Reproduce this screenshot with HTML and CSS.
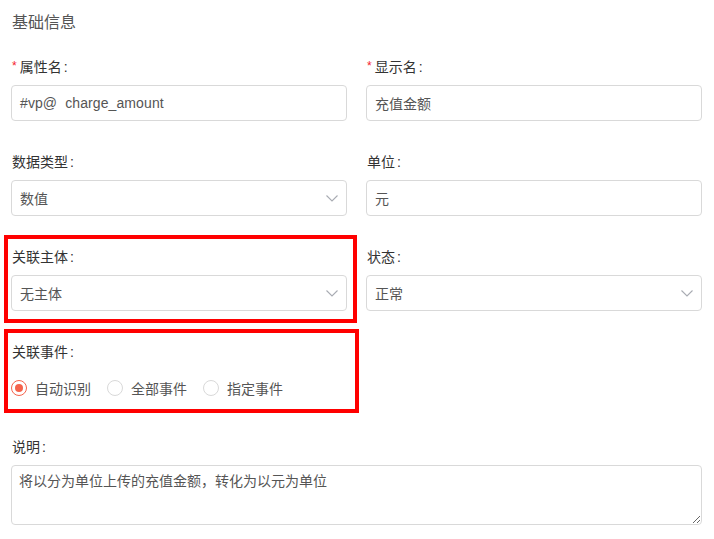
FILE: index.html
```html
<!DOCTYPE html>
<html lang="zh">
<head>
<meta charset="utf-8">
<link rel="stylesheet" href="styles.css">
</head>
<body>
<div class="page">
  <div class="title">基础信息</div>
  <div class="grid">
    <div class="item">
      <div class="label"><span class="star">*</span>属性名<span class="colon">:</span></div>
      <div class="control"><span class="value latin">#vp@&nbsp;&nbsp;charge_amount</span></div>
    </div>
    <div class="item">
      <div class="label"><span class="star">*</span>显示名<span class="colon">:</span></div>
      <div class="control"><span class="value">充值金额</span></div>
    </div>
    <div class="item">
      <div class="label">数据类型<span class="colon">:</span></div>
      <div class="control select"><span class="value">数值</span>
        <svg class="chev" width="12" height="7" viewBox="0 0 12 7"><path d="M0.5 0.5 L6 6 L11.5 0.5" fill="none" stroke="#a8abb2" stroke-width="1.1"/></svg>
      </div>
    </div>
    <div class="item">
      <div class="label">单位<span class="colon">:</span></div>
      <div class="control"><span class="value">元</span></div>
    </div>
    <div class="item">
      <div class="label">关联主体<span class="colon">:</span></div>
      <div class="control select"><span class="value">无主体</span>
        <svg class="chev" width="12" height="7" viewBox="0 0 12 7"><path d="M0.5 0.5 L6 6 L11.5 0.5" fill="none" stroke="#a8abb2" stroke-width="1.1"/></svg>
      </div>
    </div>
    <div class="item">
      <div class="label">状态<span class="colon">:</span></div>
      <div class="control select"><span class="value">正常</span>
        <svg class="chev" width="12" height="7" viewBox="0 0 12 7"><path d="M0.5 0.5 L6 6 L11.5 0.5" fill="none" stroke="#a8abb2" stroke-width="1.1"/></svg>
      </div>
    </div>
    <div class="item">
      <div class="label">关联事件<span class="colon">:</span></div>
      <div class="radios">
        <span class="radio checked"><span class="dot"></span>自动识别</span>
        <span class="radio"><span class="dot"></span>全部事件</span>
        <span class="radio"><span class="dot"></span>指定事件</span>
      </div>
    </div>
    <div class="item"></div>
    <div class="item full">
      <div class="label">说明<span class="colon">:</span></div>
      <textarea class="area">将以分为单位上传的充值金额，转化为以元为单位</textarea>
    </div>
  </div>
  <div class="mark mark-1"></div>
  <div class="mark mark-2"></div>
</div>
</body>
</html>
```

FILE: styles.css
```css
* { box-sizing: border-box; }
html, body { margin: 0; padding: 0; background: #fff; }
body {
  font-family: "Liberation Sans", "Noto Sans CJK SC", sans-serif;
  font-size: 14px;
  color: #333;
}
.page {
  position: relative;
  width: 714px;
  height: 539px;
  overflow: hidden;
  padding: 13px 12px 0 11px;
}
.title {
  font-size: 16px;
  line-height: 20px;
  color: #555;
  margin-bottom: 24px;
  padding-left: 1px;
}
.grid {
  display: grid;
  grid-template-columns: 336px 336px;
  column-gap: 19px;
}
.item { margin-bottom: 31px; }
.item.full { grid-column: 1 / span 2; }
.label {
  height: 20px;
  line-height: 20px;
  margin-bottom: 8px;
  color: #333;
  padding-left: 1px;
  display: flex;
  align-items: center;
}
.star {
  color: #f5222d;
  font-size: 12px;
  margin-right: 3px;
  position: relative;
  top: -1px;
}
.colon { margin-left: 2px; }
.control {
  height: 36px;
  border: 1px solid #d9d9d9;
  border-radius: 4px;
  display: flex;
  align-items: center;
  padding: 0 8px;
  color: #555;
}
.value { flex: 1; }
.latin { letter-spacing: 0.1px; }
.chev { margin-right: 0; }
.radios {
  height: 36px;
  display: flex;
  align-items: center;
  color: #555;
}
.radio {
  display: flex;
  align-items: center;
  margin-right: 16px;
}
.dot {
  width: 16px;
  height: 16px;
  border: 1px solid #d9d9d9;
  border-radius: 50%;
  margin-right: 8px;
  display: flex;
  align-items: center;
  justify-content: center;
}
.radio.checked .dot { border-color: #f5624b; }
.radio.checked .dot::after {
  content: "";
  width: 8px;
  height: 8px;
  border-radius: 50%;
  background: #f5624b;
}
.area {
  display: block;
  width: 691px;
  height: 60px;
  border: 1px solid #d9d9d9;
  border-radius: 4px;
  padding: 5px 7px;
  font-family: "Liberation Sans", "Noto Sans CJK SC", sans-serif;
  font-size: 14px;
  line-height: 20px;
  color: #555;
  resize: both;
  outline: none;
}
.mark {
  position: absolute;
  border: 4px solid #ff0000;
  pointer-events: none;
}
.mark-1 { left: 4px; top: 235px; width: 353px; height: 88px; }
.mark-2 { left: 4px; top: 329px; width: 355px; height: 84px; }
```
